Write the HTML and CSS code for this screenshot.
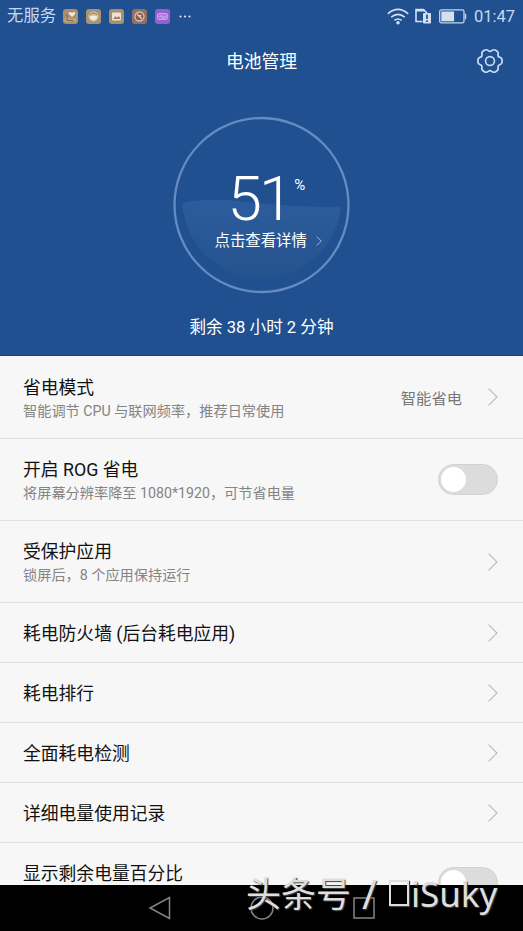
FILE: index.html
```html
<!DOCTYPE html>
<html lang="zh-CN">
<head>
<meta charset="utf-8">
<title>电池管理</title>
<link rel="stylesheet" href="styles.css">
</head>
<body>
<div class="phone">
  <header class="hero">
    <div class="status">
      <span class="carrier">无服务</span>
      <div class="notifs">
        <svg class="app" viewBox="0 0 15 15"><rect width="15" height="15" rx="3" fill="#a98f70"/><path d="M1 11l4-4 3 3 5-1v4H2z" fill="#c5a681"/><path d="M9 8L5.800 5C5 3 8 2 9 4c1-2 4-1 3.200 1z" fill="#eee8e4"/><path d="M3 5l2 4-2 2 8 1" fill="none" stroke="#77664f"/></svg>
        <svg class="app" viewBox="0 0 15 15"><rect width="15" height="15" rx="3" fill="#a8946f"/><circle cx="7.500" cy="7.500" r="5" fill="#d8c4a6"/><path d="M4 7h7q0 4-3.500 4T4 7z" fill="#f1ece5"/><path d="M4 6q3.500-4 7 0" fill="none" stroke="#8a704c"/></svg>
        <svg class="app" viewBox="0 0 15 15"><rect width="15" height="15" rx="3" fill="#a6906d"/><rect x="3" y="3.500" width="9" height="8" rx="1" fill="#ede5dc"/><path d="M4 10l2.500-3L8 8.500 10 7l1.500 3z" fill="#9a8062"/></svg>
        <svg class="app" viewBox="0 0 15 15"><rect width="15" height="15" rx="3" fill="#94705e"/><circle cx="7.500" cy="7.500" r="4.500" fill="#8a5950" stroke="#d8c0b3" stroke-width="1.300"/><path d="M5 5l5 5M7 8l2-2" stroke="#e8d8d0" stroke-width="1.300"/></svg>
        <svg class="app" viewBox="0 0 15 15"><rect width="15" height="15" rx="3" fill="#965fce"/><rect x="2.500" y="4.500" width="10" height="6" rx="1.500" fill="#a87ddb" stroke="#c8a6ec"/><path d="M4.500 8q1.500-3 3 0t3-1" fill="none" stroke="#dfcaf4"/></svg>
      </div>
      <svg class="more" viewBox="0 0 12 3" fill="#d4e0f2"><circle cx="1.500" cy="1.500" r="1.100"/><circle cx="6" cy="1.500" r="1.100"/><circle cx="10.500" cy="1.500" r="1.100"/></svg>
      <svg class="wifi" viewBox="0 0 22 17" fill="none" stroke="#d3e0f2" stroke-width="1.700"><path d="M.8 5.800Q11-3 21.200 5.800M4.200 9.200q6.800-5.600 13.600 0M7.400 12.400q3.600-2.800 7.200 0"/><circle cx="11" cy="14.800" r="1.800" fill="#d3e0f2" stroke="none"/></svg>
      <svg class="sim" viewBox="0 0 16 16"><path d="M7.500 13.500H1V1.500h7.500l3 3V6" fill="none" stroke="#d3e0f2" stroke-width="1.600"/><path d="M1 1h7.500l2 2.500H1z" fill="#d3e0f2"/><rect x="8" y="5" width="8" height="10.500" rx="1" fill="#d3e0f2"/><path d="M12 6.500v4.500M12 12.200v1.700" stroke="#20508f" stroke-width="1.700"/></svg>
      <svg class="batt" viewBox="0 0 28 15"><rect x=".7" y=".9" width="24.300" height="13" rx="1.700" fill="none" stroke="#c5d5ec" stroke-width="1.300"/><path d="M2.300 2.500h12.800v9.800H2.300z" fill="#d3e0f2"/><path d="M26 4.500q1.200 0 1.200 1v4q0 1-1.200 1z" fill="#c5d5ec"/></svg>
      <span class="clock">01:47</span>
    </div>
    <div class="titlebar">
      <h1>电池管理</h1>
      <svg class="gear" viewBox="-14.500 -14.500 29 29" fill="none" stroke="#c7dcf2" stroke-width="1.700"><path d="M12.600 0Q12.600 3.100 10.200 3.800Q7.800 4.500 8.400 6.900Q9 9.300 6.300 10.900Q3.600 12.500 1.800 10.750Q0 9-1.800 10.750Q-3.600 12.500-6.300 10.900Q-9 9.300-8.400 6.900Q-7.800 4.500-10.200 3.800Q-12.600 3.100-12.600 0Q-12.600-3.100-10.200-3.800Q-7.800-4.500-8.400-6.900Q-9-9.300-6.300-10.900Q-3.600-12.500-1.800-10.750Q0-9 1.800-10.750Q3.600-12.500 6.300-10.900Q9-9.300 8.400-6.900Q7.800-4.500 10.200-3.800Q12.600-3.100 12.600 0Z"/><circle r="4.600"/></svg>
    </div>
    <div class="gauge">
      <svg class="ring" viewBox="0 0 178 178">
        <defs><linearGradient id="water" x1="0" y1="0" x2="0" y2="1"><stop offset="0" stop-color="#2d5c9c"/><stop offset="1" stop-color="#25538f"/></linearGradient></defs>
        <path d="M9.500 87Q38 81 75 86T168 91A79.500 79.500 0 0 1 9.500 87z" fill="url(#water)"/>
        <circle cx="88.500" cy="89" r="87" fill="none" stroke="#648bc2" stroke-width="2.300"/>
      </svg>
      <div class="reading">
        <div class="level"><span class="num">51</span><span class="pct">%</span></div>
        <div class="detail"><span>点击查看详情</span><svg viewBox="0 0 6 10" fill="none" stroke="#9db8dc"><path d="M.7.5L5.200 5 .7 9.500"/></svg></div>
      </div>
    </div>
    <p class="remain">剩余 38 小时 2 分钟</p>
  </header>
  <main class="list">
    <section class="row tall"><div class="text"><h2>省电模式</h2><p>智能调节 CPU 与联网频率，推荐日常使用</p></div><span class="value">智能省电</span><svg class="chev" viewBox="0 0 10 18"><path d="M.6.6L9 9 .6 17.400"/></svg></section>
    <section class="row tall"><div class="text"><h2>开启 ROG 省电</h2><p>将屏幕分辨率降至 1080*1920，可节省电量</p></div><span class="switch"></span></section>
    <section class="row tall"><div class="text"><h2>受保护应用</h2><p>锁屏后，8 个应用保持运行</p></div><svg class="chev" viewBox="0 0 10 18"><path d="M.6.6L9 9 .6 17.400"/></svg></section>
    <section class="row"><h2>耗电防火墙 (后台耗电应用)</h2><svg class="chev" viewBox="0 0 10 18"><path d="M.6.6L9 9 .6 17.400"/></svg></section>
    <section class="row"><h2>耗电排行</h2><svg class="chev" viewBox="0 0 10 18"><path d="M.6.6L9 9 .6 17.400"/></svg></section>
    <section class="row"><h2>全面耗电检测</h2><svg class="chev" viewBox="0 0 10 18"><path d="M.6.6L9 9 .6 17.400"/></svg></section>
    <section class="row"><h2>详细电量使用记录</h2><svg class="chev" viewBox="0 0 10 18"><path d="M.6.6L9 9 .6 17.400"/></svg></section>
    <section class="row last"><h2>显示剩余电量百分比</h2><span class="switch"></span></section>
  </main>
  <nav class="nav">
    <svg viewBox="0 0 24 24"><path d="M21.500 1.500v21L2 12z"/></svg>
    <svg viewBox="0 0 24 24"><circle cx="12" cy="12" r="11"/></svg>
    <svg viewBox="0 0 24 24"><rect x="2" y="2" width="20" height="20"/></svg>
  </nav>
  <div class="mark"><span class="cn">头条号</span><span class="slash">/</span><i class="box"></i><span class="name">iSuky</span></div>
</div>
</body>
</html>
```
FILE: styles.css
```css
* { box-sizing: border-box; }
body, h1, h2, p { margin: 0; font-weight: 400; }
svg { display: block; flex: none; }
body { font-family: Roboto, "Noto Sans CJK SC", sans-serif; background: #000; }
.phone { position: relative; width: 523px; height: 931px; display: flex; flex-direction: column; overflow: hidden; }

.hero { height: 356px; flex: none; background: #20508f; border-bottom: 1px solid #17407c; color: #fff; display: flex; flex-direction: column; }
.status { height: 32px; padding: 0 7px; display: flex; align-items: center; color: #c6d8f0; }
.carrier { font-size: 16.400px; line-height: 24px; width: 56px; white-space: nowrap; }
.notifs { display: flex; gap: 8px; }
.app { width: 15px; height: 15px; }
.more { width: 12px; height: 3px; margin-left: 9px; }
.wifi { width: 22px; height: 17px; margin-left: auto; }
.sim { width: 16px; height: 16px; margin-left: 6px; }
.batt { width: 28px; height: 15px; margin-left: 8px; }
.clock { font-size: 16.500px; margin-left: 7px; width: 42px; white-space: nowrap; }

.titlebar { height: 58px; display: grid; grid-template-columns: 60px 1fr 60px; align-items: center; }
.titlebar h1 { grid-column: 2; text-align: center; font-size: 17.800px; line-height: 26px; padding-top: 2px; }
.gear { width: 28px; height: 28px; margin-left: 13px; }

.gauge { width: 178px; height: 178px; margin: 26px auto 0; display: grid; }
.ring, .reading { grid-area: 1 / 1; }
.ring { width: 178px; height: 178px; }
.reading { padding-top: 51px; }
.level { display: flex; height: 63px; padding-left: 55px; }
.num { font-size: 62px; line-height: 64px; font-weight: 300; letter-spacing: -3px; }
.pct { font-size: 15px; line-height: 18px; margin: 9px 0 0 4px; }
.detail { display: flex; align-items: center; padding-left: 42px; gap: 9px; font-size: 15.400px; line-height: 22px; white-space: nowrap; }
.detail svg { width: 6px; height: 10px; }
.remain { text-align: center; font-size: 16.600px; line-height: 24px; margin-top: 22px; }

.list { height: 529px; background: #f7f7f7; overflow: hidden; }
.row { height: 60px; padding: 0 25px 0 23px; display: flex; align-items: center; border-bottom: 1px solid #e1e1e1; color: #111; }
.row.tall { height: 82px; }
.row.tall:first-child { height: 83px; }
.row h2 { font-size: 17.800px; line-height: 26px; white-space: nowrap; }
.row > h2 { padding-top: 2px; }
.text { padding-top: 1px; }
.row:first-child .text { padding-top: 3px; }
.text h2 { line-height: 25px; }
.row p { font-size: 14.200px; line-height: 22px; color: #848484; white-space: nowrap; }
.value { margin-left: auto; font-size: 15.300px; color: #777; }
.chev { width: 10px; height: 18px; margin-left: auto; fill: none; stroke: #bdbdbd; stroke-width: 1.200; }
.value + .chev { margin-left: 26px; }
.switch { width: 60px; height: 31px; margin-left: auto; border-radius: 16px; background: #dcdcdc; border: 1px solid #d2d2d2; padding: 2px; }
.switch::before { content: ""; display: block; width: 25px; height: 25px; border-radius: 50%; background: #fff; }
.last .switch { margin-top: 20px; }

.nav { flex: 1; background: #000; display: flex; justify-content: center; align-items: center; gap: 78px; }
.nav svg { width: 24px; height: 24px; fill: none; stroke: #858585; stroke-width: 1.500; }

.mark { position: absolute; left: 246px; top: 869px; height: 50px; display: flex; align-items: center; white-space: nowrap; color: #dedede; font-family: "Noto Sans", "Noto Sans CJK SC", sans-serif; font-size: 35px; line-height: 50px; text-shadow: 1px 1px 1px #444; }
.slash { margin-left: 11px; font-size: 40px; }
.box { width: 20px; height: 26px; margin: 0 2px 2px 12px; border: 2px solid #dedede; box-shadow: 1px 1px 1px #444; }
```
